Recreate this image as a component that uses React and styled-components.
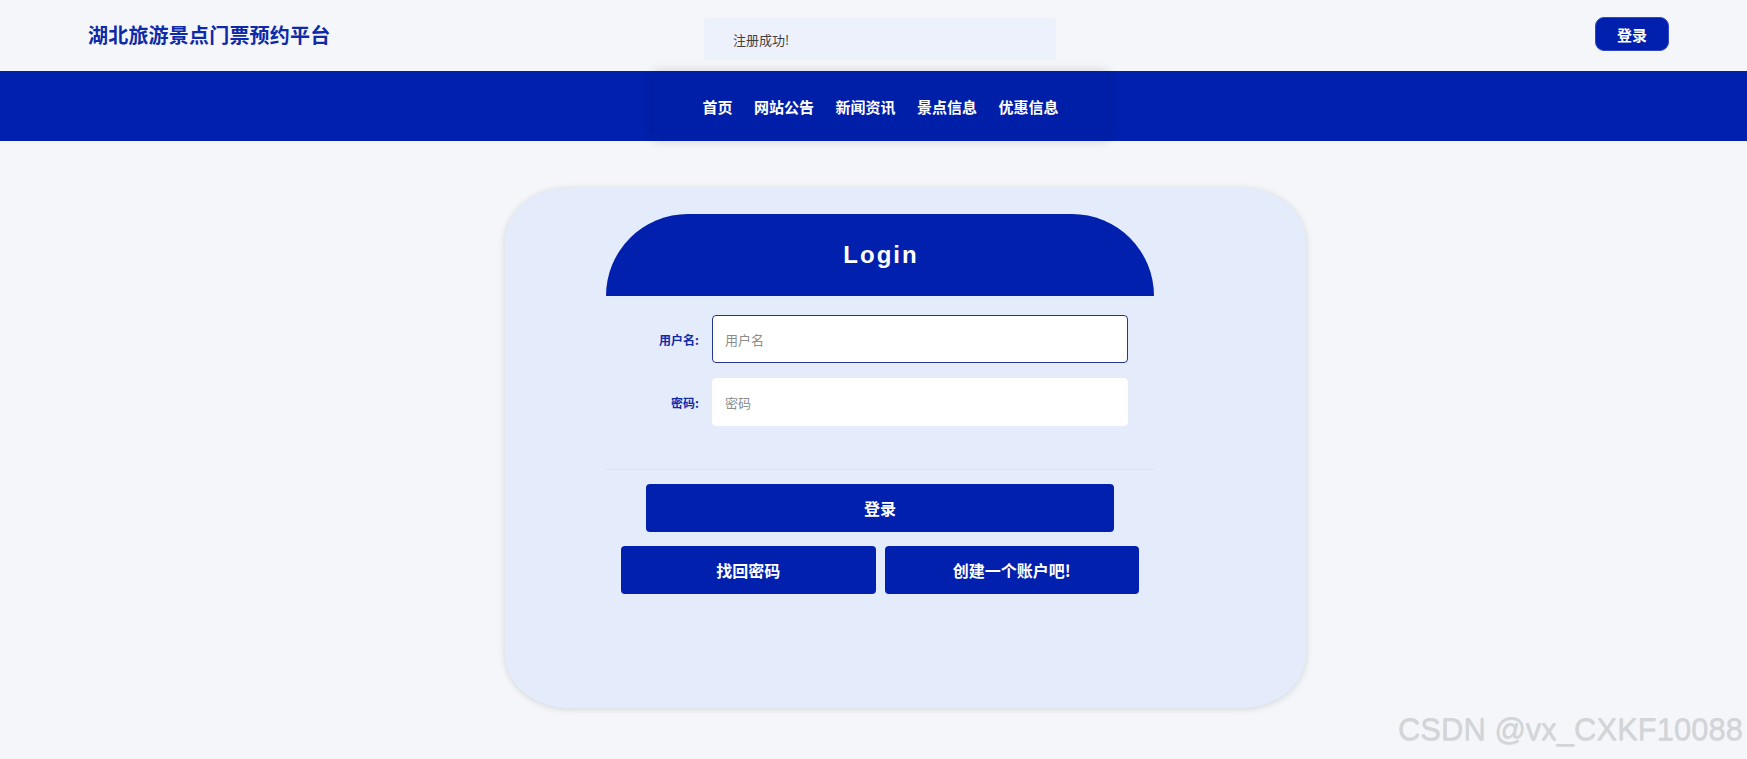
import React from 'react';
import styled, { createGlobalStyle } from 'styled-components';

const BLUE = '#0020ad';

const Global = createGlobalStyle`
  html, body { margin: 0; padding: 0; }
  body {
    background: #f4f6fa;
    font-family: "Noto Sans CJK SC", "Noto Sans", sans-serif;
  }
  * { box-sizing: border-box; }
`;

const Page = styled.div`
  position: relative;
  min-height: 759px;
  background: #f4f6fa;
  overflow: hidden;
`;

const TopBar = styled.header`
  height: 71px;
  display: flex;
  align-items: center;
  padding: 0 78px 0 88px;
`;

const Brand = styled.h1`
  flex: 0 0 616px;
  margin: -2px 0 0;
  font-size: 20px;
  font-weight: 700;
  color: #0f2aa8;
  letter-spacing: 0.2px;
`;

const Notice = styled.div`
  width: 352px;
  height: 42px;
  margin-top: 7px;
  display: flex;
  align-items: center;
  padding-left: 29px;
  background: #edf1fb;
  border-radius: 4px;
  box-shadow: 0 0 1px rgba(0, 0, 0, 0.06);
  font-size: 13px;
  color: #3f3f3f;
`;

const TopButton = styled.button`
  margin-left: auto;
  margin-top: -3px;
  width: 74px;
  height: 34px;
  border: 1px solid #3048c0;
  border-radius: 9px;
  background: ${BLUE};
  color: #fff;
  font-family: inherit;
  font-size: 15px;
  font-weight: 700;
  cursor: pointer;
`;

const NavBar = styled.nav`
  height: 70px;
  background: ${BLUE};
  display: flex;
`;

const NavInner = styled.div`
  margin-left: 653px;
  width: 455px;
  display: flex;
  align-items: center;
  justify-content: center;
  gap: 21.5px;
  background: #001fa9;
  box-shadow: 0 0 10px rgba(0, 0, 0, 0.14);
`;

const NavItem = styled.a`
  color: #fff;
  font-size: 15px;
  font-weight: 700;
  text-decoration: none;
  cursor: pointer;
`;

const Card = styled.section`
  margin: 47px 0 0 505px;
  width: 801px;
  height: 520px;
  background: #e4ecfb;
  border-radius: 64px / 54px;
  box-shadow: 0 1px 7px rgba(0, 0, 0, 0.14);
  padding: 26px 0 0 101px;
`;

const FormBox = styled.div`
  width: 548px;
`;

const LoginHead = styled.div`
  height: 82px;
  background: ${BLUE};
  border-radius: 82px 82px 0 0;
  display: flex;
  align-items: center;
  justify-content: center;
  color: #fff;
  font-family: "Liberation Sans", Arial, sans-serif;
  font-size: 24px;
  font-weight: 700;
  letter-spacing: 2px;
  padding-left: 2px;
`;

const Fields = styled.div`
  margin-top: 19px;
  display: flex;
  flex-direction: column;
  gap: 15px;
`;

const Row = styled.label`
  display: flex;
  align-items: center;
  gap: 13px;
`;

const LabelText = styled.span`
  width: 93px;
  text-align: right;
  font-size: 12px;
  font-weight: 700;
  color: #0f2aa8;
`;

const Input = styled.input`
  width: 416px;
  height: 48px;
  border: 1px solid ${(p) => (p.$active ? '#26368f' : '#ffffff')};
  border-radius: 4px;
  background: #fff;
  padding: 0 12px;
  font-family: inherit;
  font-size: 13px;
  color: #333;
  outline: none;
  &::placeholder { color: #8c8c8c; }
`;

const Divider = styled.hr`
  margin: 43px 0 0;
  border: none;
  height: 1px;
  background: #dae2f1;
`;

const Actions = styled.div`
  margin-top: 14px;
  display: flex;
  flex-direction: column;
  gap: 14px;
`;

const ButtonRow = styled.div`
  display: flex;
  gap: 9px;
  padding: 0 ${(p) => p.$inset}px;
`;

const Btn = styled.button`
  flex: 1;
  height: 48px;
  border: none;
  border-radius: 4px;
  background: ${BLUE};
  color: #fff;
  font-family: inherit;
  font-size: 16px;
  font-weight: 700;
  cursor: pointer;
`;

const Watermark = styled.div`
  position: absolute;
  right: 4px;
  bottom: 14px;
  font-family: "Liberation Sans", Arial, sans-serif;
  font-size: 31px;
  line-height: 1;
  color: #d2d4d8;
  text-shadow: 0 1px 1px rgba(0, 0, 0, 0.12);
  pointer-events: none;
`;

const navItems = ['首页', '网站公告', '新闻资讯', '景点信息', '优惠信息'];

export default function App() {
  return (
    <Page>
      <Global />
      <TopBar>
        <Brand>湖北旅游景点门票预约平台</Brand>
        <Notice>注册成功!</Notice>
        <TopButton>登录</TopButton>
      </TopBar>
      <NavBar>
        <NavInner>
          {navItems.map((n) => (
            <NavItem key={n}>{n}</NavItem>
          ))}
        </NavInner>
      </NavBar>
      <Card>
        <FormBox>
          <LoginHead>Login</LoginHead>
          <Fields>
            <Row>
              <LabelText>用户名:</LabelText>
              <Input $active autoFocus placeholder="用户名" />
            </Row>
            <Row>
              <LabelText>密码:</LabelText>
              <Input type="password" placeholder="密码" />
            </Row>
          </Fields>
          <Divider />
          <Actions>
            <ButtonRow $inset={40}>
              <Btn>登录</Btn>
            </ButtonRow>
            <ButtonRow $inset={15}>
              <Btn>找回密码</Btn>
              <Btn>创建一个账户吧!</Btn>
            </ButtonRow>
          </Actions>
        </FormBox>
      </Card>
      <Watermark>CSDN @vx_CXKF10088</Watermark>
    </Page>
  );
}
